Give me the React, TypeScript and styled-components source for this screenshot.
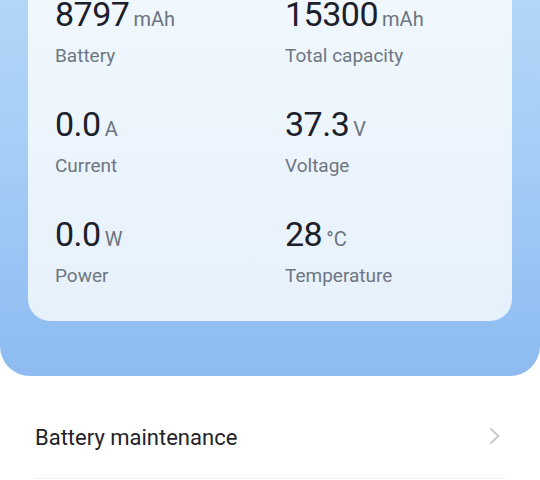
import React from 'react';
import styled, { createGlobalStyle } from 'styled-components';

const GlobalStyle = createGlobalStyle`
  html, body {
    margin: 0;
    padding: 0;
    background: #ffffff;
  }
  body {
    font-family: Roboto, 'Noto Sans', 'Liberation Sans', sans-serif;
    -webkit-font-smoothing: antialiased;
  }
`;

const Screen = styled.div`
  width: 540px;
  height: 480px;
  overflow: hidden;
  background: #ffffff;
`;

// the page is scrolled, so the top of the hero sits above the viewport
const Hero = styled.section`
  margin-top: -56px;
  padding: 20px 28px 55px;
  background: linear-gradient(180deg, #b6d9f8 0%, #a4cdf6 50%, #8dbbf1 100%);
  border-radius: 0 0 30px 30px;
`;

const StatsCard = styled.div`
  display: grid;
  grid-template-columns: 230px 1fr;
  row-gap: 36px;
  padding: 30px 27px 33px;
  background: linear-gradient(180deg, #f1f8fe 0%, #e7f1fb 100%);
  border-radius: 22px;
`;

const Stat = styled.div`
  display: flex;
  flex-direction: column;
`;

const ValueLine = styled.div`
  display: flex;
  align-items: baseline;
  height: 40px;
  line-height: 40px;
`;

const Number = styled.span`
  font-size: 34px;
  font-weight: 400;
  color: #1b202a;
  letter-spacing: -0.5px;
`;

const Unit = styled.span`
  margin-left: 4px;
  font-size: 20px;
  color: #6c7480;
`;

const Label = styled.div`
  margin-top: 10px;
  font-size: 19px;
  line-height: 24px;
  color: #6e7682;
`;

const List = styled.div`
  padding: 38px 35px 0;
`;

const Row = styled.div`
  display: flex;
  align-items: center;
  justify-content: space-between;
  height: 46px;
  padding-bottom: 18px;
  border-bottom: 1px solid #eeeeee;
`;

const RowTitle = styled.span`
  font-size: 22px;
  color: #1f232a;
`;

const Chevron = styled.svg`
  width: 12px;
  height: 18px;
  margin-right: 4px;
  margin-top: -3px;
`;

const stats = [
  { value: '8797', unit: 'mAh', label: 'Battery' },
  { value: '15300', unit: 'mAh', label: 'Total capacity' },
  { value: '0.0', unit: 'A', label: 'Current' },
  { value: '37.3', unit: 'V', label: 'Voltage' },
  { value: '0.0', unit: 'W', label: 'Power' },
  { value: '28', unit: '°C', label: 'Temperature' },
];

export default function App() {
  return (
    <Screen>
      <GlobalStyle />
      <Hero>
        <StatsCard>
          {stats.map((s) => (
            <Stat key={s.label}>
              <ValueLine>
                <Number>{s.value}</Number>
                <Unit>{s.unit}</Unit>
              </ValueLine>
              <Label>{s.label}</Label>
            </Stat>
          ))}
        </StatsCard>
      </Hero>
      <List>
        <Row>
          <RowTitle>Battery maintenance</RowTitle>
          <Chevron viewBox="0 0 12 18" fill="none">
            <path d="M2 2l7.5 7L2 16" stroke="#c9c9c9" strokeWidth="2" strokeLinecap="round" strokeLinejoin="round" />
          </Chevron>
        </Row>
      </List>
    </Screen>
  );
}
